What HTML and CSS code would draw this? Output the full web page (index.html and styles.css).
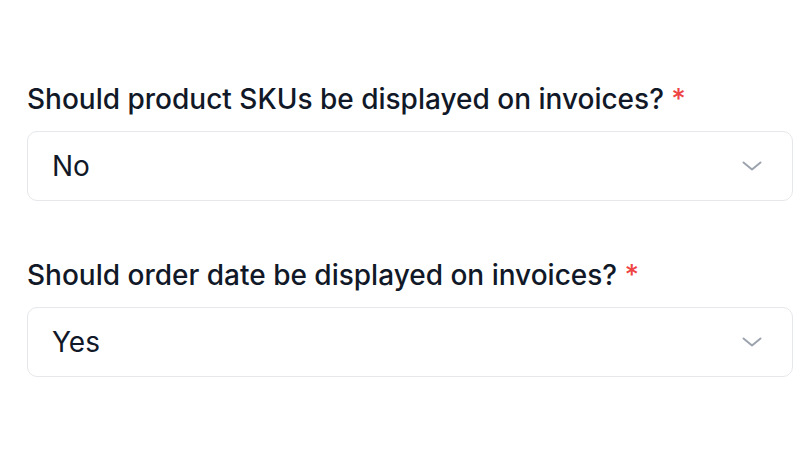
FILE: index.html
```html
<!DOCTYPE html>
<html lang="en">
<head>
    <meta charset="UTF-8">
    <meta name="viewport" content="width=device-width, initial-scale=1.0">
    <title>Invoice settings</title>
    <link rel="stylesheet" href="styles.css">
</head>
<body>
    <div class="form">
        <div class="field">
            <label class="label" for="show-sku">Should product SKUs be displayed on invoices? <span class="required">*</span></label>
            <div class="select" id="show-sku">
                <span class="value">No</span>
                <svg class="chevron" width="20" height="10" viewBox="0 0 20 10" fill="none">
                    <path d="M1.5 1.5L10 8.5L18.5 1.5" stroke="currentColor" stroke-width="2" stroke-linecap="round" stroke-linejoin="round"/>
                </svg>
            </div>
        </div>

        <div class="field">
            <label class="label" for="show-date">Should order date be displayed on invoices? <span class="required">*</span></label>
            <div class="select" id="show-date">
                <span class="value">Yes</span>
                <svg class="chevron" width="20" height="10" viewBox="0 0 20 10" fill="none">
                    <path d="M1.5 1.5L10 8.5L18.5 1.5" stroke="currentColor" stroke-width="2" stroke-linecap="round" stroke-linejoin="round"/>
                </svg>
            </div>
        </div>
    </div>
</body>
</html>
```

FILE: styles.css
```css
body {
    margin: 0;
    font-family: Inter, 'Noto Sans', sans-serif;
    background: white;
    color: #111827;
}
.form {
    padding: 81px 19px 0 27px;
    display: flex;
    flex-direction: column;
    gap: 56px;
}
.field {
    display: flex;
    flex-direction: column;
    gap: 14px;
}
.label {
    font-size: 28px;
    line-height: 36px;
    font-weight: 500;
}
.required {
    color: #ef4444;
}
.select {
    height: 70px;
    box-sizing: border-box;
    border: 1.5px solid #e5e7eb;
    border-radius: 10px;
    display: flex;
    align-items: center;
    justify-content: space-between;
    padding: 0 30px 0 24px;
}
.value {
    font-size: 28px;
}
.chevron {
    color: #9ca3af;
}
```
